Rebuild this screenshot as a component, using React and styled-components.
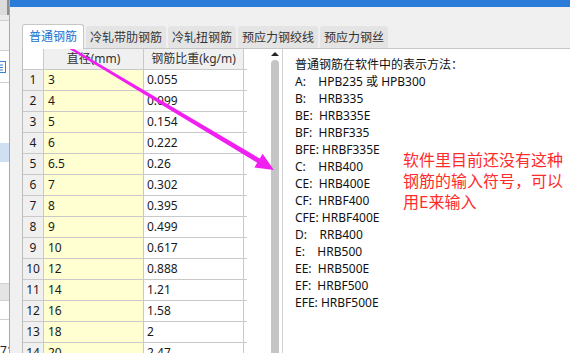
import React from 'react'
import styled, { createGlobalStyle } from 'styled-components'

const GlobalStyle = createGlobalStyle`
    html, body {
        margin: 0;
        padding: 0;
    }
    body {
        width: 570px;
        height: 353px;
        overflow: hidden;
        background: #f0f0f0;
        font-family: "Noto Sans", "Noto Sans CJK SC", sans-serif;
        font-size: 12px;
        color: #111;
    }
`;

const Screen = styled.div`
    position: relative;
    display: flex;
    width: 570px;
    height: 353px;
    overflow: hidden;
`;

const Sidebar = styled.div`
    flex: none;
    width: 9px;
    display: flex;
    flex-direction: column;
    background: #fff;
    border-right: 1px solid #a9a9a9;
    overflow: hidden;
`;

const SideBlock = styled.div`
    flex: none;
    height: ${p => p.h}px;
    background: ${p => p.bg || '#fff'};
    border-bottom: ${p => p.line ? '1px solid #d0d0d0' : 'none'};
    border-right: ${p => p.edge ? '2px solid #8c8c8c' : 'none'};
    display: flex;
    align-items: ${p => p.bottom ? 'flex-end' : 'center'};
    white-space: nowrap;
    color: #222;
    line-height: 14px;
`;

const SideIcon = styled.svg`
    flex: none;
    margin-left: -7px;
`;

const Main = styled.div`
    flex: 1;
    min-width: 0;
    display: flex;
    flex-direction: column;
`;

const TitleBar = styled.div`
    flex: none;
    height: 7px;
    background: #2b7cd9;
`;

const Body = styled.div`
    flex: 1;
    min-height: 0;
    display: flex;
    flex-direction: column;
    padding: 16px 0 0 12px;
`;

const TabStrip = styled.div`
    flex: none;
    height: 25px;
    display: flex;
    align-items: flex-end;
    gap: 2px;
`;

const Tab = styled.div`
    position: relative;
    z-index: ${p => p.active ? 1 : 0};
    height: ${p => p.active ? 25 : 22}px;
    margin-bottom: ${p => p.active ? -1 : 0}px;
    padding: 0 ${p => p.active ? 6 : 3}px;
    display: flex;
    align-items: center;
    box-sizing: border-box;
    background: ${p => p.active ? '#fff' : '#e4e4e4'};
    border: 1px solid ${p => p.active ? '#c6c6c6' : '#e4e4e4'};
    border-bottom: none;
    border-radius: 3px 3px 0 0;
    color: ${p => p.active ? '#1b6fd1' : '#333'};
    line-height: 16px;
    white-space: nowrap;
`;

const Panel = styled.div`
    flex: 1;
    min-height: 0;
    display: flex;
    background: #fff;
    border-top: 1px solid #c6c6c6;
    border-left: 1px solid #bcbcbc;
`;

const LeftPane = styled.div`
    flex: none;
    width: 259px;
    display: flex;
`;

const Grid = styled.div`
    flex: none;
    width: 224px;
    display: flex;
    flex-direction: column;
`;

const GridRow = styled.div`
    flex: none;
    display: grid;
    grid-template-columns: 21px 100px 100px;
    height: 20px;
    border-bottom: 1px solid #c9c9c9;
`;

const Cell = styled.div`
    display: flex;
    align-items: center;
    justify-content: ${p => p.center ? 'center' : 'flex-start'};
    padding-left: ${p => p.center ? 0 : p.pad}px;
    border-right: 1px solid #c9c9c9;
    background: ${p => p.bg};
    color: ${p => p.head ? '#333' : '#1a1a1a'};
    line-height: 16px;
    white-space: nowrap;
    overflow: hidden;
`;

const Gap = styled.div`
    flex: 1;
`;

const Scrollbar = styled.div`
    flex: none;
    width: 14px;
    display: flex;
    flex-direction: column;
    align-items: center;
`;

const ScrollArrow = styled.div`
    flex: none;
    margin-top: 3px;
    width: 0;
    height: 0;
    border-left: 4px solid transparent;
    border-right: 4px solid transparent;
    border-bottom: 4px solid #222;
`;

const ScrollThumb = styled.div`
    flex: 1;
    width: 8px;
    margin-top: 4px;
    background: #c5c5c5;
    border-radius: 4px 4px 0 0;
`;

const RightPane = styled.div`
    flex: 1;
    min-width: 0;
    display: grid;
    align-content: start;
    justify-items: start;
    padding: 7px 0 0 12px;
    border-left: 1px solid #d2d2d2;
`;

const CodeList = styled.div`
    grid-area: 1 / 1;
    display: flex;
    flex-direction: column;
    align-items: flex-start;
`;

const CodeLine = styled.div`
    line-height: 17px;
    white-space: pre;
    color: #111;
`;

const Note = styled.div`
    grid-area: 1 / 1;
    align-self: start;
    margin: 93px 0 0 108px;
    font-family: "Noto Sans CJK SC", sans-serif;
    font-size: 16px;
    line-height: 21px;
    color: #ff2b2b;
    white-space: nowrap;
`;

const ArrowLayer = styled.svg`
    position: absolute;
    top: 0;
    left: 0;
    pointer-events: none;
`;

const tabs = ['普通钢筋', '冷轧带肋钢筋', '冷轧扭钢筋', '预应力钢绞线', '预应力钢丝'];

const rows = [
    ['3', '0.055'], ['4', '0.099'], ['5', '0.154'], ['6', '0.222'], ['6.5', '0.26'],
    ['7', '0.302'], ['8', '0.395'], ['9', '0.499'], ['10', '0.617'], ['12', '0.888'],
    ['14', '1.21'], ['16', '1.58'], ['18', '2'], ['20', '2.47'],
];

const codes = [
    '普通钢筋在软件中的表示方法：',
    'A:    HPB235 或 HPB300',
    'B:    HRB335',
    'BE:  HRB335E',
    'BF:  HRBF335',
    'BFE: HRBF335E',
    'C:    HRB400',
    'CE:  HRB400E',
    'CF:  HRBF400',
    'CFE: HRBF400E',
    'D:    RRB400',
    'E:    HRB500',
    'EE:  HRB500E',
    'EF:  HRBF500',
    'EFE: HRBF500E',
];

const App = () => {
    return (
        <Screen>
            <GlobalStyle />
            <Sidebar>
                <SideBlock h={15} bg="#dcdcdc" edge />
                <SideBlock h={5} bg="#ebebeb" line />
                <SideBlock h={29} bg="#f4f4f4" line />
                <SideBlock h={31} line>
                    <SideIcon width="14" height="14" viewBox="0 0 14 14">
                        <rect x="1.5" y="1.5" width="11" height="11" fill="#fff" stroke="#3b7fcf" />
                        <path d="M4 5h6M4 7.5h6M4 10h6" stroke="#3b7fcf" />
                    </SideIcon>
                </SideBlock>
                <SideBlock h={60} />
                <SideBlock h={19} bg="#cfe0f4" />
                <SideBlock h={121} line />
                <SideBlock h={16} bg="#e4e4e4" line />
                <SideBlock h={18} line />
                <SideBlock h={38} bottom>71</SideBlock>
            </Sidebar>
            <Main>
                <TitleBar />
                <Body>
                    <TabStrip>
                        {tabs.map((t, i) => (
                            <Tab key={t} active={i === 0}>{t}</Tab>
                        ))}
                    </TabStrip>
                    <Panel>
                        <LeftPane>
                            <Grid>
                                <GridRow>
                                    <Cell bg="#fff" />
                                    <Cell head center bg="#f0f0f0">直径(mm)</Cell>
                                    <Cell head center bg="#f0f0f0">钢筋比重(kg/m)</Cell>
                                </GridRow>
                                {rows.map((r, i) => (
                                    <GridRow key={i}>
                                        <Cell center bg="#f0f0f0">{i + 1}</Cell>
                                        <Cell pad={4} bg="#ffffd2">{r[0]}</Cell>
                                        <Cell pad={3} bg="#fff">{r[1]}</Cell>
                                    </GridRow>
                                ))}
                            </Grid>
                            <Gap />
                            <Scrollbar>
                                <ScrollArrow />
                                <ScrollThumb />
                            </Scrollbar>
                        </LeftPane>
                        <RightPane>
                            <CodeList>
                                {codes.map(c => <CodeLine key={c}>{c}</CodeLine>)}
                            </CodeList>
                            <Note>
                                软件里目前还没有这种<br />
                                钢筋的输入符号，可以<br />
                                用E来输入
                            </Note>
                        </RightPane>
                    </Panel>
                </Body>
            </Main>
            <ArrowLayer width="570" height="353" viewBox="0 0 570 353">
                <polygon
                    points="60.5,41.1 259.8,158.6 262.6,153.8 274,170 254.4,167.6 257.2,162.8 59.5,42.9"
                    fill="#f020f0"
                />
            </ArrowLayer>
        </Screen>
    )
}

export default App
